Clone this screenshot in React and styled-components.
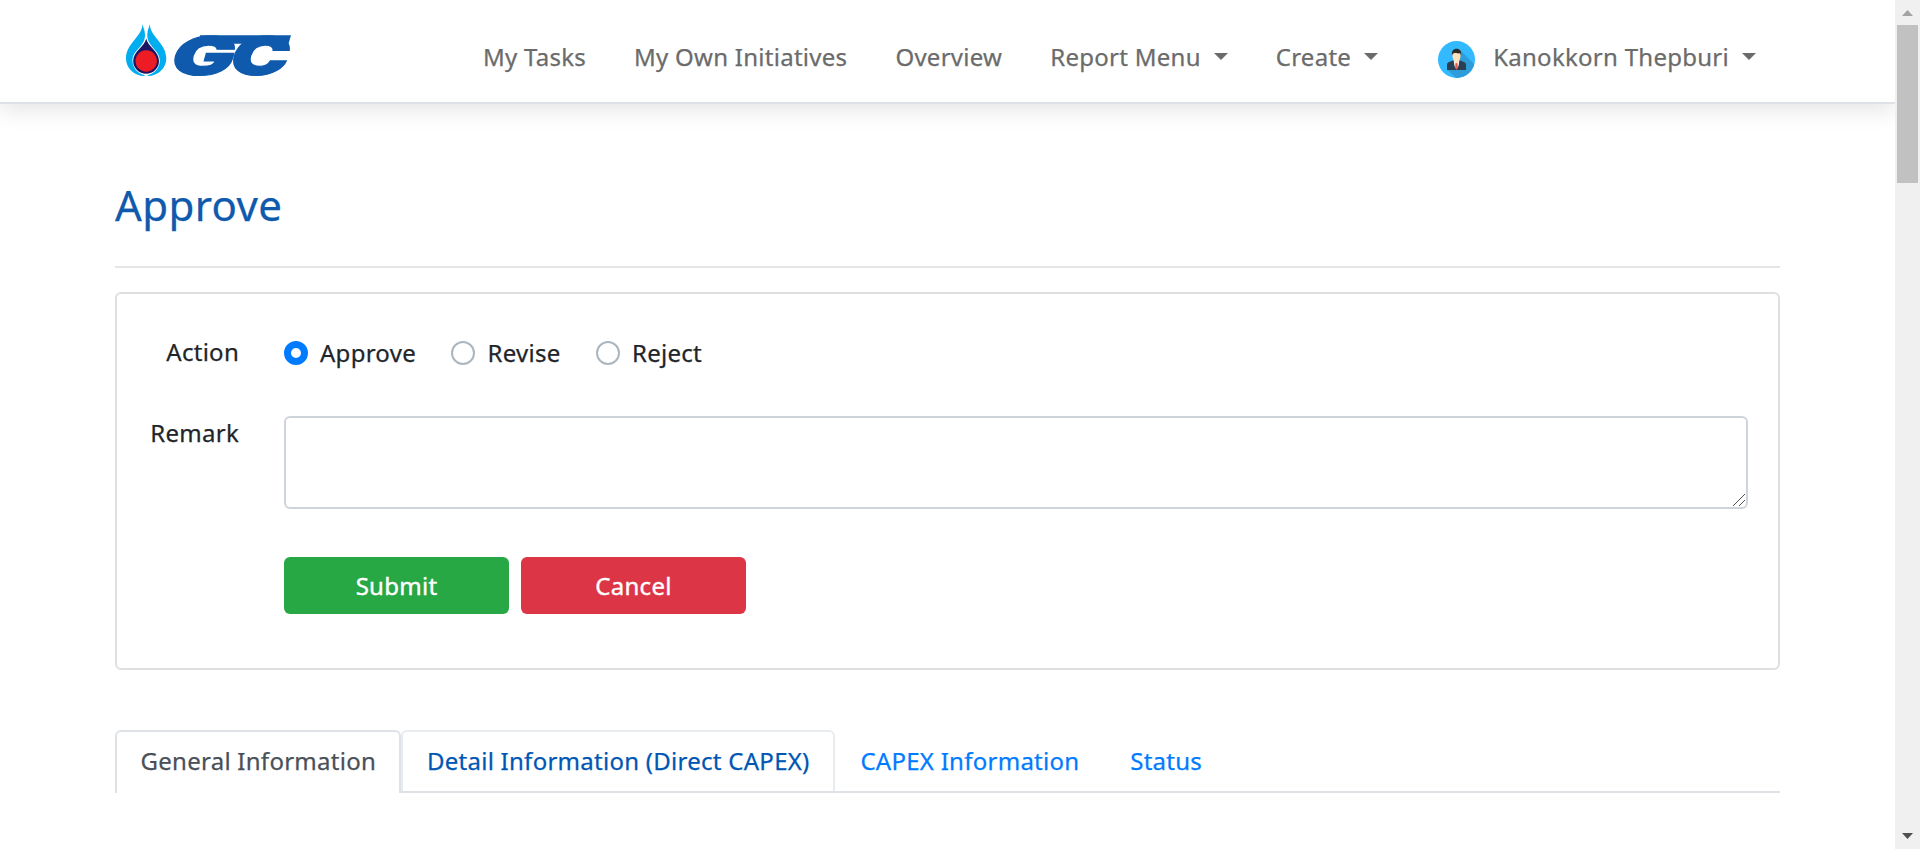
import React from "react";
import styled, { createGlobalStyle, css } from "styled-components";

const GlobalStyle = createGlobalStyle`
  *, *::before, *::after { box-sizing: border-box; }
  html, body { margin: 0; padding: 0; height: 100%; overflow: hidden; background: #fff; }
  body {
    font-family: "Noto Sans", "Open Sans", sans-serif;
    font-size: 24px;
    font-weight: 400;
    letter-spacing: 0.27px;
    line-height: 36px;
    color: #212529;
    -webkit-text-stroke: 0.25px currentColor;
  }
`;

const Window = styled.div`
  display: flex;
  height: 849px;
  overflow: hidden;
`;

const Page = styled.div`
  flex: 1;
  min-width: 0;
  overflow: hidden;
  background: #fff;
`;

const Header = styled.header`
  height: 104px;
  padding: 0 115px;
  display: flex;
  align-items: flex-start;
  justify-content: space-between;
  background: #fff;
  border-bottom: 2px solid #dee2e6;
  box-shadow: 0 6px 22px rgba(0, 0, 0, 0.11);
`;

const Logo = styled.svg`
  display: block;
  overflow: visible;
  margin: 20px 0 0 5px;
  letter-spacing: 0;
`;

const Nav = styled.nav`
  display: flex;
  align-items: center;
  gap: 48px;
  padding-top: 39px;
  margin-right: 24px;
`;

const NavLink = styled.a`
  display: flex;
  align-items: center;
  height: 36px;
  color: #6b6b6b;
  white-space: nowrap;
  cursor: pointer;
`;

const Caret = styled.span`
  margin: 0 0 1px 13px;
  border-top: 7px solid currentColor;
  border-left: 7px solid transparent;
  border-right: 7px solid transparent;
`;

const Avatar = styled.svg`
  display: block;
  margin: 5px 18px 0 12px;
`;

const Main = styled.main`
  padding: 76px 115px 0;
`;

const Title = styled.h1`
  margin: 0;
  font-size: 42px;
  font-weight: 400;
  letter-spacing: 0.38px;
  line-height: 50px;
  color: #0f5aad;
`;

const Rule = styled.hr`
  margin: 36px 0 24px;
  border: 0;
  height: 2px;
  background: #e5e5e5;
`;

const Card = styled.section`
  height: 378px;
  padding: 41px 30px 0 31px;
  border: 2px solid #dfdfdf;
  border-radius: 6px;
`;

const FormRow = styled.div`
  display: grid;
  grid-template-columns: 91px 1fr;
  column-gap: 45px;
  margin-bottom: ${(p) => p.$gap}px;
`;

const Label = styled.label`
  text-align: right;
  margin-top: -1px;
`;

const Options = styled.div`
  display: flex;
  gap: 35.5px;
`;

const Option = styled.label`
  display: flex;
  align-items: center;
  gap: 12px;
  height: 36px;
`;

const Radio = styled.span`
  width: 24px;
  height: 24px;
  border-radius: 50%;
  border: 2px solid #adb5bd;
  background: #fff;
  ${(p) =>
    p.$checked &&
    css`
      border: 7.5px solid #007bff;
    `}
`;

const Field = styled.div`
  position: relative;
`;

const Grip = styled.svg`
  position: absolute;
  right: 3px;
  bottom: 3px;
  pointer-events: none;
`;

const TextArea = styled.textarea`
  display: block;
  width: 100%;
  height: 93px;
  padding: 9px 18px;
  font: inherit;
  border: 2px solid #ced4da;
  border-radius: 6px;
  outline: none;
  resize: none;
  background: #fff;
`;

const Buttons = styled.div`
  display: flex;
  gap: 12px;
  grid-column: 2;
`;

const Button = styled.button`
  width: 225px;
  height: 57px;
  padding: 0;
  border: 0;
  border-radius: 6px;
  background: ${(p) => p.$color};
  color: #fff;
  font: inherit;
  letter-spacing: inherit;
  -webkit-text-stroke: 0.4px #fff;
`;

const Tabs = styled.div`
  display: flex;
  margin-top: 60px;
  height: 63px;
  border-bottom: 2px solid #dee2e6;
`;

const Tab = styled.a`
  height: 61px;
  padding: 11px 23.3px 0 23.5px;
  border: 2px solid transparent;
  border-bottom: 0;
  border-radius: 6px 6px 0 0;
  white-space: nowrap;
  color: #007bff;
  ${(p) =>
    p.$state === "active" &&
    css`
      height: 63px;
      color: #495057;
      background: #fff;
      border-color: #dee2e6;
    `}
  ${(p) =>
    p.$state === "hover" &&
    css`
      color: #0056b3;
      border-color: #e9ecef;
    `}
`;

const Scrollbar = styled.aside`
  width: 25px;
  display: flex;
  flex-direction: column;
  align-items: center;
  background: #f0f0f0;
`;

const Arrow = styled.svg`
  display: block;
  width: 25px;
  height: 25px;
  flex: none;
`;

const Thumb = styled.div`
  width: 21px;
  height: 158px;
  margin-bottom: auto;
  background: #c1c1c1;
`;

function GcLogo() {
  return (
    <Logo width="176" height="60" viewBox="120 20 176 60">
      <path d="M142.3 24C143 36 126 43 126 58.500C126 68 134 76 144.500 76L144.500 75C137 73.500 132.500 67 132.500 60.500C132.500 50 145 47 145 35C145 30 143 27 142.300 24Z" fill="#00aeef" />
      <path d="M150 24C149.300 36 166.300 43 166.300 58.500C166.300 68 158.300 76 147.800 76L147.800 75C155.300 73.500 159.800 67 159.800 60.500C159.800 50 147.300 47 147.300 35C147.300 30 149.300 27 150 24Z" fill="#00aeef" />
      <path d="M146.200 38.500C148 47 159 51 159 61A12.900 12.700 0 0 1 133.200 61C133.200 51 144.500 47 146.200 38.500Z" fill="#1b1464" />
      <circle cx="146.200" cy="61" r="10.700" fill="#ed1c24" />
      <g fill="#0f5aad" stroke="#0f5aad" strokeWidth="1.200" fontFamily="Inter, sans-serif" fontWeight="900" fontSize="53">
        <text transform="translate(167.500 75) skewX(-16)" textLength="63" lengthAdjust="spacingAndGlyphs">G</text>
        <text transform="translate(226.500 75) skewX(-16)" textLength="58" lengthAdjust="spacingAndGlyphs">C</text>
      </g>
      <path d="M200 35.300H291L288.500 43.800H200Z" fill="#0f5aad" />
    </Logo>
  );
}

function UserAvatar() {
  return (
    <Avatar width="37" height="37" viewBox="0 0 37 37">
      <defs>
        <clipPath id="disc">
          <circle cx="18.500" cy="18.500" r="18.500" />
        </clipPath>
      </defs>
      <g clipPath="url(#disc)">
        <path d="M0 0H37V37H0Z" fill="#32b9ff" />
        <path d="M22 9L38 25V38H19L9 28.500Z" fill="#2d9dd9" />
      </g>
      <path d="M9 29V23.500C9 21.500 11 20.800 15 19.500H22C26 20.800 28 21.500 28 23.500V29Z" fill="#2c3e50" />
      <path d="M15.500 18.500H21.500L20.500 25L18.500 28.500L16.500 25Z" fill="#fff" />
      <path d="M17.600 21.500H19.400L19.900 26L18.500 28.800L17.100 26Z" fill="#e8594b" />
      <path d="M14.500 11.500H22.500V15C22.500 17.500 21.300 19 20.700 19.600V21L18.500 22.300L16.300 21V19.600C15.500 19 14.500 17.500 14.500 15Z" fill="#ffe0b8" />
      <path d="M14 14.500C13.300 10 15.500 7.800 18.500 7.800C22 7.800 23.600 10 23 14.500L22.200 12.300C19.500 12.500 18 12.300 17 11.800L14.800 12.800Z" fill="#302b29" />
    </Avatar>
  );
}

const actions = ["Approve", "Revise", "Reject"];

export default function App() {
  return (
    <>
      <GlobalStyle />
      <Window>
        <Page>
          <Header>
            <GcLogo />
            <Nav>
              <NavLink>My Tasks</NavLink>
              <NavLink>My Own Initiatives</NavLink>
              <NavLink>Overview</NavLink>
              <NavLink>Report Menu<Caret /></NavLink>
              <NavLink>Create<Caret /></NavLink>
              <NavLink><UserAvatar />Kanokkorn Thepburi<Caret /></NavLink>
            </Nav>
          </Header>
          <Main>
            <Title>Approve</Title>
            <Rule />
            <Card>
              <FormRow $gap={45}>
                <Label>Action</Label>
                <Options>
                  {actions.map((name, i) => (
                    <Option key={name}>
                      <Radio $checked={i === 0} />
                      {name}
                    </Option>
                  ))}
                </Options>
              </FormRow>
              <FormRow $gap={48}>
                <Label>Remark</Label>
                <Field>
                  <TextArea />
                  <Grip width="12" height="12" viewBox="0 0 12 12">
                    <path d="M0 12L12 0M6 12L12 6" stroke="#505050" strokeWidth="1" />
                  </Grip>
                </Field>
              </FormRow>
              <FormRow $gap={0}>
                <Buttons>
                  <Button $color="#28a745">Submit</Button>
                  <Button $color="#dc3545">Cancel</Button>
                </Buttons>
              </FormRow>
            </Card>
            <Tabs>
              <Tab $state="active">General Information</Tab>
              <Tab $state="hover">Detail Information (Direct CAPEX)</Tab>
              <Tab>CAPEX Information</Tab>
              <Tab>Status</Tab>
            </Tabs>
          </Main>
        </Page>
        <Scrollbar>
          <Arrow viewBox="0 0 25 25"><path d="M7 16L12.500 10L18 16Z" fill="#a3a3a3" /></Arrow>
          <Thumb />
          <Arrow viewBox="0 0 25 25"><path d="M7 9L18 9L12.500 15Z" fill="#505050" /></Arrow>
        </Scrollbar>
      </Window>
    </>
  );
}
